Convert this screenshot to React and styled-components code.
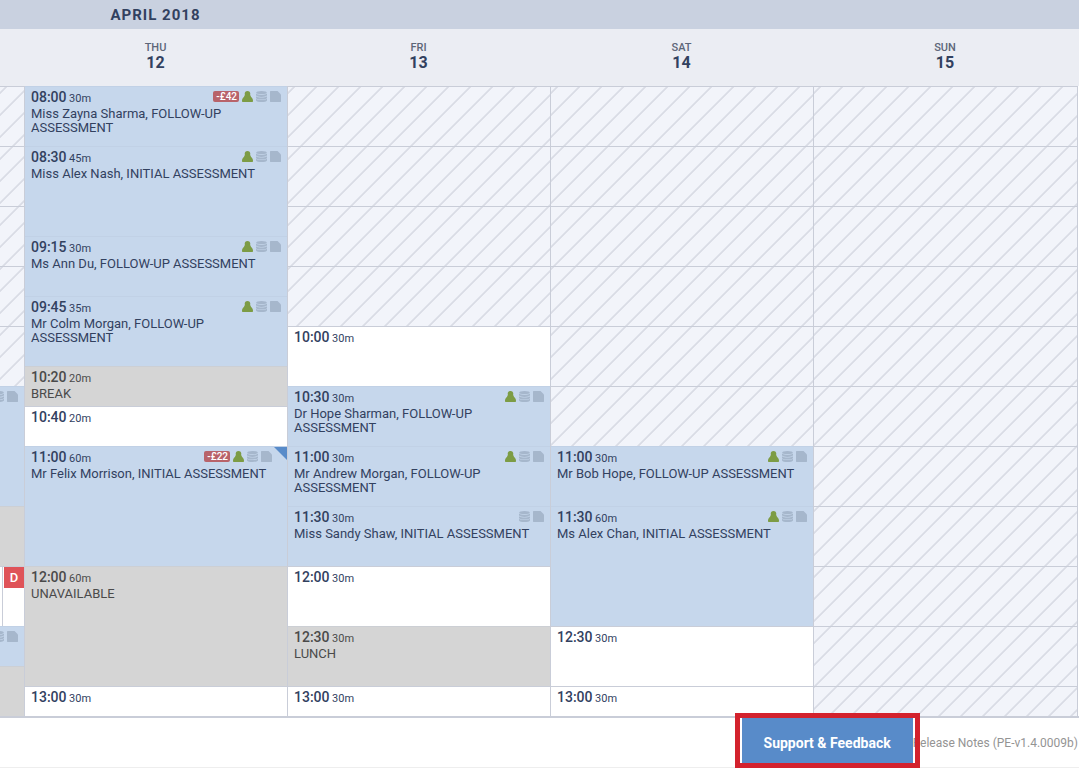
import React from 'react';
import styled, { createGlobalStyle } from 'styled-components';

const Colors = {
    navy: '#32415f',
    label: '#5d6678',
    month: '#c9d1e0',
    weekday: '#ebedf3',
    line: '#c9cdd8',
    booked: '#c6d7ec',
    blocked: '#d5d5d5',
    free: '#ffffff',
    closed: '#f2f4fa',
    hatch: '#d9dce5',
    icon: '#a6b7cc',
    arrived: '#7d9c45',
    owing: '#b8636a',
    diary: '#df5358',
    blue: '#588bc9',
    red: '#d3222d',
    muted: '#949494',
};

const days = [
    {
        key: 'wed',
        closed: 5,
        slots: [
            { kind: 'booked', mins: 60, icons: true },
            { kind: 'blocked', mins: 30 },
            { kind: 'free', mins: 30, badge: 'D' },
            { kind: 'booked', mins: 20, icons: true },
            { kind: 'blocked', mins: 25 },
        ],
    },
    {
        key: 'thu',
        closed: 0,
        slots: [
            { kind: 'booked', time: '08:00', mins: 30, text: 'Miss Zayna Sharma, FOLLOW-UP ASSESSMENT', icons: true, arrived: true, owing: '-£42' },
            { kind: 'booked', time: '08:30', mins: 45, text: 'Miss Alex Nash, INITIAL ASSESSMENT', icons: true, arrived: true },
            { kind: 'booked', time: '09:15', mins: 30, text: 'Ms Ann Du, FOLLOW-UP ASSESSMENT', icons: true, arrived: true },
            { kind: 'booked', time: '09:45', mins: 35, text: 'Mr Colm Morgan, FOLLOW-UP ASSESSMENT', icons: true, arrived: true },
            { kind: 'blocked', time: '10:20', mins: 20, text: 'BREAK' },
            { kind: 'free', time: '10:40', mins: 20 },
            { kind: 'booked', time: '11:00', mins: 60, text: 'Mr Felix Morrison, INITIAL ASSESSMENT', icons: true, arrived: true, owing: '-£22', flagged: true },
            { kind: 'blocked', time: '12:00', mins: 60, text: 'UNAVAILABLE' },
            { kind: 'free', time: '13:00', mins: 30, cut: 15 },
        ],
    },
    {
        key: 'fri',
        closed: 4,
        slots: [
            { kind: 'free', time: '10:00', mins: 30 },
            { kind: 'booked', time: '10:30', mins: 30, text: 'Dr Hope Sharman, FOLLOW-UP ASSESSMENT', icons: true, arrived: true },
            { kind: 'booked', time: '11:00', mins: 30, text: 'Mr Andrew Morgan, FOLLOW-UP ASSESSMENT', icons: true, arrived: true },
            { kind: 'booked', time: '11:30', mins: 30, text: 'Miss Sandy Shaw, INITIAL ASSESSMENT', icons: true },
            { kind: 'free', time: '12:00', mins: 30 },
            { kind: 'blocked', time: '12:30', mins: 30, text: 'LUNCH' },
            { kind: 'free', time: '13:00', mins: 30, cut: 15 },
        ],
    },
    {
        key: 'sat',
        closed: 6,
        slots: [
            { kind: 'booked', time: '11:00', mins: 30, text: 'Mr Bob Hope, FOLLOW-UP ASSESSMENT', icons: true, arrived: true },
            { kind: 'booked', time: '11:30', mins: 60, text: 'Ms Alex Chan, INITIAL ASSESSMENT', icons: true, arrived: true },
            { kind: 'free', time: '12:30', mins: 30 },
            { kind: 'free', time: '13:00', mins: 30, cut: 15 },
        ],
    },
    { key: 'sun', closed: 10, slots: [{ kind: 'closed', mins: 15 }] },
];

const weekdays = [['THU', 12], ['FRI', 13], ['SAT', 14], ['SUN', 15]];

const PersonIcon = () => (
    <Icon viewBox="0 0 11 11" $color={Colors.arrived} aria-hidden="true">
        <path d="M5.500 0C3.700 0 2.700 1.200 2.700 2.800c0 1 .4 1.800.9 2.400C1.800 6 0 7 0 9.400V10.300c0 .4.300.7.700.7h9.600c.4 0 .7-.3.7-.7V9.400C11 7 9.200 6 7.400 5.200c.5-.6.9-1.400.9-2.400C8.300 1.200 7.300 0 5.500 0z" />
        <path d="M3 3.500H8L9.500 7H1.500z" />
    </Icon>
)

const StackIcon = () => (
    <Icon viewBox="0 0 11 11" $color={Colors.icon} aria-hidden="true">
        <ellipse cx="5.5" cy="1.6" rx="5.3" ry="1.6" />
        <path d="M0 2.600c1.300 1.100 3.300 1.300 5.500 1.300S9.700 3.700 11 2.600v1.700C10.500 5.300 8.200 5.900 5.500 5.900S.5 5.300 0 4.300z" />
        <path d="M0 5.200c1.300 1.100 3.300 1.300 5.500 1.300S9.700 6.300 11 5.200v1.700C10.500 7.900 8.200 8.500 5.500 8.500S.5 7.900 0 6.900z" />
        <path d="M0 7.700c1.300 1.100 3.300 1.300 5.500 1.300S9.700 8.800 11 7.700v1.700C10.500 10.400 8.200 11 5.500 11S.5 10.400 0 9.400z" />
    </Icon>
)

const NoteIcon = () => (
    <Icon viewBox="0 0 11 11" $color={Colors.icon} aria-hidden="true">
        <path d="M.5 0H7.500L11 3.500V10.500c0 .3-.2.5-.5.5H.5C.2 11 0 10.800 0 10.500V.5C0 .2.2 0 .5 0z" />
    </Icon>
)

const Appointment = ({ slot }) => (
    <Slot $kind={slot.kind} $mins={slot.cut || slot.mins} $ruled={Boolean(slot.badge)}>
        <SlotHead $flagged={slot.flagged}>
            {slot.time && <Time>{slot.time} <small>{slot.mins}m</small></Time>}
            <Status>
                {slot.owing && <Owing>{slot.owing}</Owing>}
                {slot.arrived && <PersonIcon />}
                {slot.icons && <StackIcon />}
                {slot.icons && <NoteIcon />}
            </Status>
        </SlotHead>
        {slot.text && <Patient>{slot.text}</Patient>}
        {slot.flagged && <Flag viewBox="0 0 13 13" aria-hidden="true"><path d="M0 0H13V13z" /></Flag>}
        {slot.badge && <DiaryBadge>{slot.badge}</DiaryBadge>}
    </Slot>
)

export default function App() {
    return (
        <>
            <GlobalStyle />
            <Calendar>
                <MonthBar><h1>APRIL 2018</h1></MonthBar>
                <WeekBar>
                    {weekdays.map(([name, date]) => (
                        <DayName key={name}>
                            <span>{name}</span>
                            <strong>{date}</strong>
                        </DayName>
                    ))}
                </WeekBar>
                <Week>
                    {days.map((day) => (
                        <Day key={day.key}>
                            {Array.from({ length: day.closed }, (_, i) => <Slot key={i} $kind="closed" $mins={30} />)}
                            {day.slots.map((slot, i) => <Appointment key={`slot-${i}`} slot={slot} />)}
                        </Day>
                    ))}
                </Week>
            </Calendar>
            <Footer>
                <Highlight>
                    <SupportButton type="button">Support &amp; Feedback</SupportButton>
                </Highlight>
                <ReleaseLink href="#release-notes">Release Notes (PE-v1.4.0009b)</ReleaseLink>
            </Footer>
        </>
    )
}

const GlobalStyle = createGlobalStyle`
    * {
        box-sizing: border-box;
    }

    body {
        margin: 0;
        background: ${Colors.free};
        color: ${Colors.navy};
        font-family: Roboto, "Liberation Sans", sans-serif;
        overflow-x: hidden;
    }
`

const Calendar = styled.main`
    border-bottom: 2px solid ${Colors.line};
`

const Columns = styled.div`
    display: grid;
    grid-template-columns: 24px repeat(3, minmax(0, 263fr)) minmax(0, 264fr);
    padding-right: 2px;
`

const MonthBar = styled(Columns)`
    height: 29px;
    align-items: center;
    background: ${Colors.month};

    h1 {
        grid-column: 2;
        margin: 0;
        font-size: 15px;
        font-weight: 700;
        letter-spacing: 1px;
        text-align: center;
    }
`

const WeekBar = styled(Columns)`
    height: 57px;
    padding-bottom: 4px;
    align-items: center;
    background: ${Colors.weekday};
`

const DayName = styled.div`
    display: flex;
    flex-direction: column;
    align-items: center;

    &:first-child {
        grid-column-start: 2;
    }

    span {
        color: ${Colors.label};
        font-size: 11px;
        font-weight: 500;
        line-height: 14px;
    }

    strong {
        font-size: 16px;
        font-weight: 700;
        line-height: 16px;
    }
`

const Week = styled(Columns)`
    background: linear-gradient(${Colors.line}, ${Colors.line}) right 1px top / 1px 100% no-repeat;
`

const Day = styled.section`
    min-width: 0;
    overflow: hidden;
    border-left: 1px solid ${Colors.line};
    background-color: ${Colors.closed};
    background-image: linear-gradient(
        135deg,
        transparent 13%, ${Colors.hatch} 14%, ${Colors.hatch} 18%, transparent 19%,
        transparent 63%, ${Colors.hatch} 64%, ${Colors.hatch} 68%, transparent 69%
    );
    background-size: 22px 22px;

    &:first-child {
        border-left: 0;
    }
`

/* two pixels for every minute */
const Slot = styled.article`
    position: relative;
    height: ${(props) => props.$mins * 2}px;
    padding: 2px 6px;
    border-top: 1px solid ${(props) => props.$kind === 'closed' || props.$kind === 'free' ? Colors.line : 'rgba(180, 190, 210, 0.25)'};
    background: ${(props) => props.$kind === 'closed' ? 'transparent' : Colors[props.$kind]};
    box-shadow: ${(props) => props.$ruled ? `inset 2px 0 ${Colors.free}, inset 3px 0 ${Colors.line}` : 'none'};
    color: ${(props) => props.$kind === 'blocked' ? '#4a4a4a' : Colors.navy};
`

const SlotHead = styled.header`
    display: flex;
    justify-content: space-between;
    height: 16px;
    padding-right: ${(props) => props.$flagged ? '9px' : '0'};
`

const Time = styled.time`
    font-size: 14px;
    font-weight: 500;
    line-height: 16px;
    white-space: nowrap;

    small {
        margin-left: -1px;
        font-size: 11px;
        font-weight: 400;
    }
`

const Status = styled.div`
    display: flex;
    flex: 1;
    justify-content: flex-end;
    align-items: center;
    gap: 3px;
    min-width: 0;
    height: 15px;
`

const Icon = styled.svg`
    flex: none;
    width: 11px;
    height: 11px;
    fill: ${(props) => props.$color};
`

const Owing = styled.span`
    padding: 0 2px 0 3px;
    border-radius: 2px;
    background: ${Colors.owing};
    color: ${Colors.free};
    font-size: 10px;
    font-weight: 500;
    line-height: 11px;
`

const Patient = styled.p`
    margin: 2px 0 0;
    font-size: 13px;
    line-height: 14px;
`

const Flag = styled.svg`
    position: absolute;
    top: 0;
    right: 0;
    width: 13px;
    height: 13px;
    fill: ${Colors.blue};
`

const DiaryBadge = styled.span`
    position: absolute;
    top: 0;
    right: 0;
    width: 20px;
    background: ${Colors.diary};
    color: ${Colors.free};
    font-size: 13px;
    font-weight: 500;
    line-height: 21px;
    text-align: center;
`

const Footer = styled.footer`
    display: flex;
    justify-content: flex-end;
    align-items: center;
    height: 50px;
    border-bottom: 1px solid #eeeeee;
`

const Highlight = styled.div`
    position: relative;
    align-self: flex-start;
    z-index: 1;
    padding: 0 7px;

    &::after {
        content: '';
        position: absolute;
        inset: -5px 0;
        border: 5px solid ${Colors.red};
        pointer-events: none;
    }
`

const SupportButton = styled.button`
    display: block;
    height: 45px;
    padding: 4px 22px 0;
    border: 0;
    background: ${Colors.blue};
    color: ${Colors.free};
    font-family: inherit;
    font-size: 14px;
    font-weight: 700;
    white-space: nowrap;
`

const ReleaseLink = styled.a`
    margin: 0 1px 0 -7px;
    color: ${Colors.muted};
    font-size: 12px;
    text-decoration: none;
    white-space: nowrap;
`
